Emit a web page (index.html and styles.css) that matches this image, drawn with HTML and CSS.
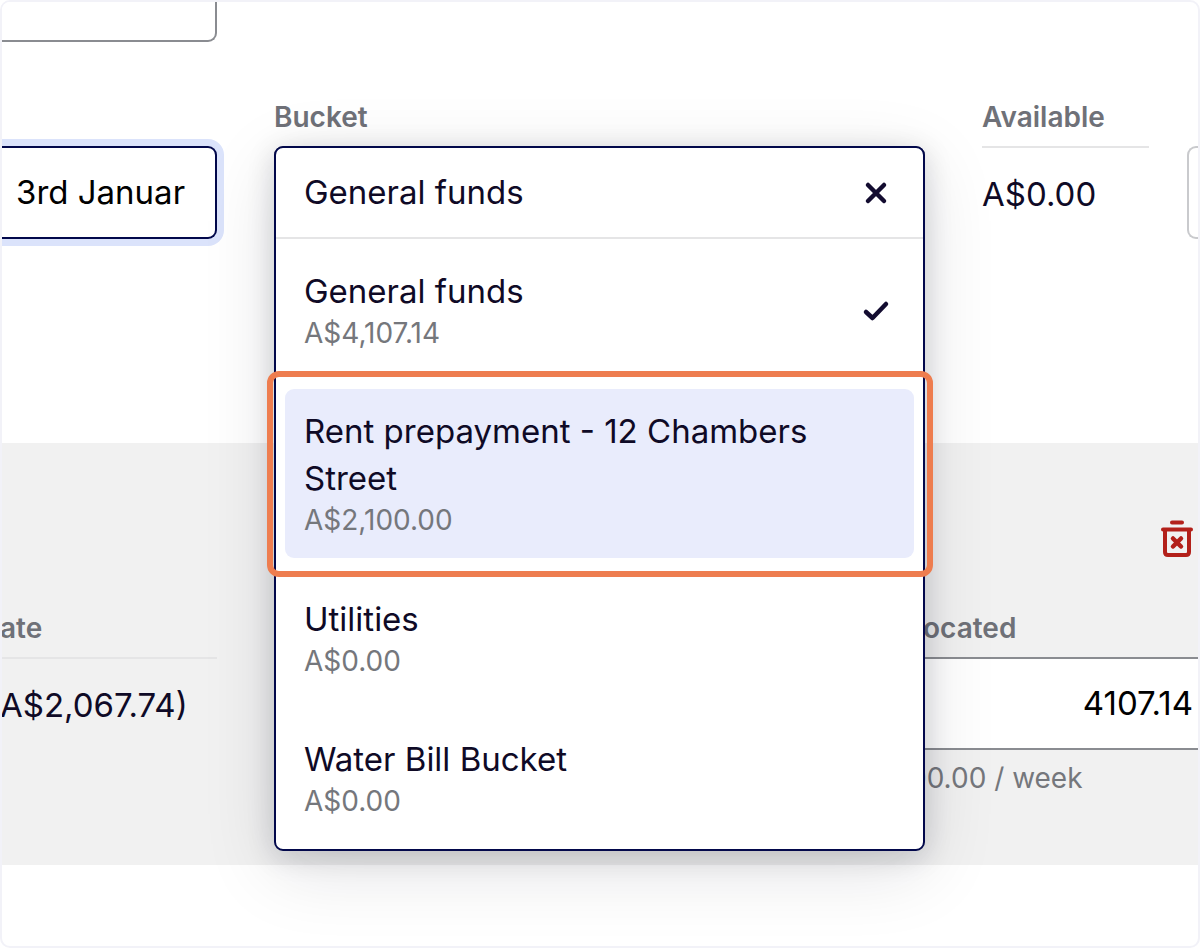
FILE: index.html
```html
<!DOCTYPE html>
<html lang="en">
<head>
<meta charset="utf-8">
<title>Allocate funds</title>
<link rel="stylesheet" href="styles.css">
</head>
<body>
<main class="frame">
  <section class="entry">
    <input class="field field-cut" type="text" aria-label="Reference">
    <div class="columns">
      <div class="column column-date">
        <input class="field field-focus" type="text" value="3rd Januar" aria-label="Date">
      </div>
      <div class="column">
        <label class="label" for="bucket">Bucket</label>
        <div class="select">
          <div class="panel">
            <div class="search">
              <input class="search-input" id="bucket" type="text" value="General funds">
              <button class="icon-button" type="button" aria-label="Clear">
                <svg class="icon" viewBox="0 0 28 28"><path d="M6 6 L22 22 M22 6 L6 22" stroke-width="4.500"/></svg>
              </button>
            </div>
            <div class="options">
              <button class="option" type="button">
                <span class="option-text"><span class="option-name">General funds</span><span class="option-sum">A$4,107.14</span></span>
                <svg class="icon" viewBox="0 0 28 28"><path d="M4 16 L10.500 22 L24 8" stroke-width="4.500"/></svg>
              </button>
              <button class="option option-active" type="button">
                <span class="option-text"><span class="option-name">Rent prepayment - 12 Chambers Street</span><span class="option-sum">A$2,100.00</span></span>
              </button>
              <button class="option" type="button">
                <span class="option-text"><span class="option-name">Utilities</span><span class="option-sum">A$0.00</span></span>
              </button>
              <button class="option" type="button">
                <span class="option-text"><span class="option-name">Water Bill Bucket</span><span class="option-sum">A$0.00</span></span>
              </button>
            </div>
          </div>
        </div>
      </div>
      <div class="column-end">
        <div class="column column-available">
          <span class="label">Available</span>
          <span class="value">A$0.00</span>
        </div>
        <div class="next-field"></div>
      </div>
    </div>
  </section>
  <section class="allocation">
    <div class="toolbar">
      <button class="icon-button" type="button" aria-label="Delete">
        <svg class="trash" viewBox="0 0 34 40"><path d="M12 3.500 H22 M3 10.500 H31 M5 11 V33 Q5 36 8 36 H26 Q29 36 29 33 V11" stroke-width="4"/><path d="M13 19.500 L21 27.500 M21 19.500 L13 27.500" stroke-width="4.500"/></svg>
      </button>
    </div>
    <div class="allocation-row">
      <div class="column column-rate">
        <span class="label">ate</span>
        <span class="value">A$2,067.74)</span>
      </div>
      <div class="column column-allocated">
        <label class="label" for="allocated">ocated</label>
        <input class="field field-amount" id="allocated" type="text" value="4107.14">
        <span class="hint">00.00 / week</span>
      </div>
    </div>
  </section>
</main>
</body>
</html>
```

FILE: styles.css
```css
* {
  box-sizing: border-box;
}

body {
  margin: 0;
  background: #fff;
  color: #0f0a26;
  font-family: Inter, "Liberation Sans", sans-serif;
  font-size: 33px;
  font-weight: 420;
  line-height: 47px;
}

input,
button {
  margin: 0;
  font: inherit;
  color: inherit;
  outline: none;
}

.frame {
  min-height: 100vh;
  border: 2px solid #f2f2f8;
  border-radius: 10px;
  overflow: hidden;
}

.entry {
  height: 441px;
}

.field {
  display: block;
  width: 100%;
  height: 93px;
  padding: 0 14px 2px;
  border: 2px solid #8a8c91;
  border-left: 0;
  border-radius: 0 9px 9px 0;
  background: #fff;
  color: #000;
}

.field-cut {
  width: 215px;
  height: 40px;
  border-top: 0;
  border-radius: 0 0 9px 0;
}

.field-focus {
  border-color: #02084b;
  box-shadow: 0 0 0 7px #dbe3fb;
}

.columns {
  display: grid;
  grid-template-columns: 215px minmax(0, 1fr) 216px;
  gap: 57px;
  padding-top: 60px;
}

.column {
  display: flex;
  flex-direction: column;
}

.column-date {
  justify-content: flex-end;
}

.label {
  padding-bottom: 14px;
  color: #6f7178;
  font-size: 28px;
  font-weight: 600;
  line-height: 30px;
}

.select {
  position: relative;
  height: 93px;
  border: 2px solid #8a8c91;
  border-radius: 9px;
}

.panel {
  position: absolute;
  top: -2px;
  left: -2px;
  right: -2px;
  z-index: 1;
  border: 2px solid #02084b;
  border-radius: 9px;
  background: #fff;
  box-shadow: 0 19px 75px rgba(15, 20, 30, 0.12), 0 5px 28px rgba(15, 20, 30, 0.16);
}

.search {
  display: flex;
  align-items: center;
  height: 91px;
  padding: 0 33px 0 28px;
  border-bottom: 2px solid #e5e5e6;
}

.search-input {
  flex: 1;
  min-width: 0;
  padding: 0;
  border: 0;
  background: none;
}

.icon-button {
  display: flex;
  padding: 0;
  border: 0;
  background: none;
}

.icon,
.trash {
  flex: none;
  width: 28px;
  height: 28px;
  fill: none;
  stroke: #130c30;
  stroke-linecap: round;
  stroke-linejoin: round;
}

.options {
  display: flex;
  flex-direction: column;
  gap: 19px;
  padding: 10px 9px 11px;
}

.option {
  position: relative;
  display: flex;
  align-items: center;
  padding: 19px 24px 19px 19px;
  border: 0;
  border-radius: 9px;
  background: none;
  text-align: left;
}

.option-text {
  display: flex;
  flex: 1;
  flex-direction: column;
}

.option-sum {
  color: #75777c;
  font-size: 28px;
  line-height: 36px;
}

.option-active {
  padding-bottom: 20px;
  background: #e9ecfc;
}

.option-active::after {
  content: "";
  position: absolute;
  inset: -18px -19px -19px -18px;
  border: 6px solid #ee7d4f;
  border-radius: 12px;
}

.column-end {
  display: flex;
  gap: 38px;
}

.column-available {
  width: 167px;
}

.value {
  padding-top: 23px;
  border-top: 2px solid #e5e5e6;
}

.next-field {
  flex: 1;
  height: 93px;
  margin-top: 44px;
  border: 2px solid #c9cacd;
  border-right: 0;
  border-radius: 9px 0 0 9px;
}

.allocation {
  height: 422px;
  background: #f1f1f1;
}

.toolbar {
  display: flex;
  justify-content: flex-end;
  padding: 76px 4px 0 0;
}

.trash {
  width: 34px;
  height: 40px;
  stroke: #b3201a;
}

.allocation-row {
  display: flex;
  justify-content: space-between;
  padding-top: 54px;
}

.column-rate {
  width: 217px;
  margin-left: -2px;
}

.column-allocated {
  width: 289px;
}

.column-allocated .label {
  padding-left: 14px;
}

.field-amount {
  padding: 0 5px 2px;
  border-right: 0;
  border-radius: 0;
  text-align: right;
}

.hint {
  padding-top: 10px;
  color: #75777c;
  font-size: 28px;
  line-height: 36px;
}
```
